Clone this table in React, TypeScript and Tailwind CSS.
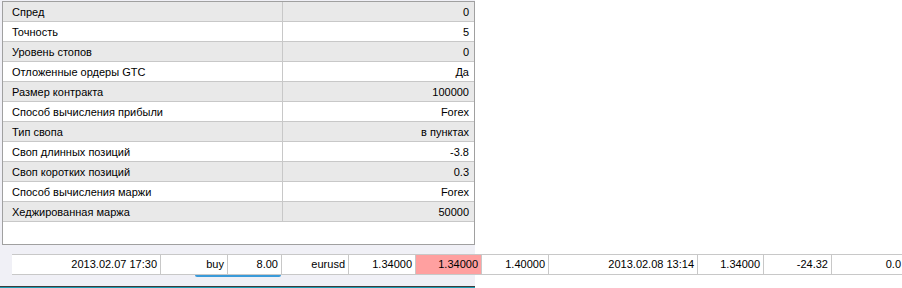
const props: [string, string][] = [
  ["Спред", "0"],
  ["Точность", "5"],
  ["Уровень стопов", "0"],
  ["Отложенные ордеры GTC", "Да"],
  ["Размер контракта", "100000"],
  ["Способ вычисления прибыли", "Forex"],
  ["Тип свопа", "в пунктах"],
  ["Своп длинных позиций", "-3.8"],
  ["Своп коротких позиций", "0.3"],
  ["Способ вычисления маржи", "Forex"],
  ["Хеджированная маржа", "50000"],
];

// width includes the right border of each cell
const trade: { text: string; w: string; pink?: boolean }[] = [
  { text: "2013.02.07 17:30", w: "w-[149px]" },
  { text: "buy", w: "w-[67px]" },
  { text: "8.00", w: "w-[54px]" },
  { text: "eurusd", w: "w-[67px]" },
  { text: "1.34000", w: "w-[67px]" },
  { text: "1.34000", w: "w-[66px]", pink: true },
  { text: "1.40000", w: "w-[67px]" },
  { text: "2013.02.08 13:14", w: "w-[149px]" },
  { text: "1.34000", w: "w-[66px]" },
  { text: "-24.32", w: "w-[68px]" },
];

export default function App() {
  return (
    <div
      className="w-[902px] h-[288px] overflow-hidden bg-[linear-gradient(to_right,#f0f0f6_475px,#ffffff_475px)] text-[11px] text-black"
      style={{ fontFamily: '"Liberation Sans", Arial, sans-serif' }}
    >
      {/* symbol properties */}
      <div className="ml-[2px] mt-px w-[473px] h-[244px] bg-white border border-[#a0a0a0]">
        {props.map(([name, value], i) => (
          <div
            key={name}
            className={`flex h-[20px] border-b border-[#c8c8c8] ${i % 2 === 0 ? "bg-[#e9e9e9]" : "bg-white"}`}
          >
            <div className="w-[280px] shrink-0 border-r border-[#c8c8c8] pl-[9px] pt-[2px] flex items-center">
              {name}
            </div>
            <div className="flex-1 pr-[5px] pt-[2px] flex items-center justify-end">{value}</div>
          </div>
        ))}
      </div>

      {/* trade row */}
      <div className="ml-[12px] mt-[9px] flex h-[21px] border-y border-[#c8c8c8] bg-white w-[890px]">
        {trade.map((c, i) => (
          <div
            key={i}
            className={`${c.w} shrink-0 border-r border-[#c8c8c8] pr-[3px] flex items-center justify-end whitespace-nowrap ${c.pink ? "bg-[#ffa0a0]" : ""}`}
          >
            {c.text}
          </div>
        ))}
        <div className="flex-1 flex items-center justify-end pr-px whitespace-nowrap">0.0</div>
      </div>
      <div className="ml-[195px] w-[86px] h-[2px] rounded-b bg-[#3a9ad9]" />

      <div className="mt-[9px] w-[475px] h-px bg-[#3c3c3c]" />
      <div className="w-[475px] h-[2px] bg-[#1c9cb4]" />
    </div>
  );
}
